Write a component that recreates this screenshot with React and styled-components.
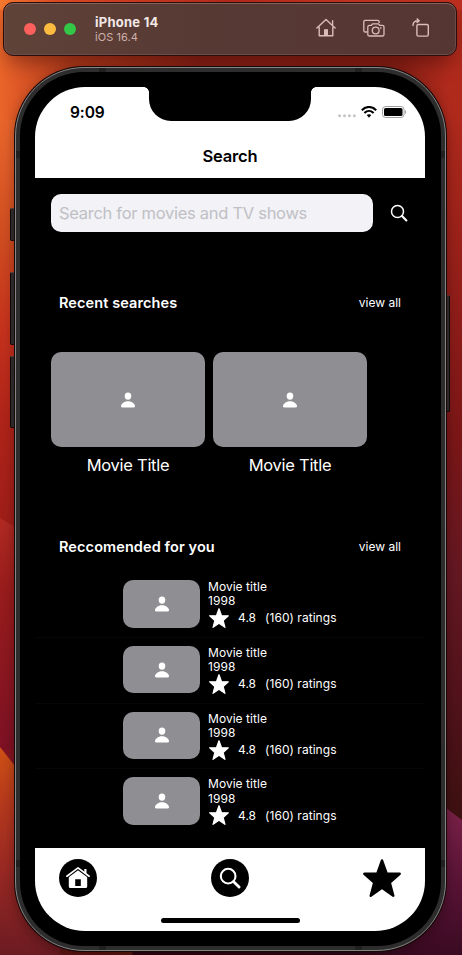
import React from "react";
import styled, { createGlobalStyle } from "styled-components";

const GlobalStyle = createGlobalStyle`
  *, *::before, *::after { box-sizing: border-box; }
  body { margin: 0; overflow: hidden; background: #7a1a18; }
`;

const Desktop = styled.main`
  position: relative;
  isolation: isolate;
  display: flex;
  flex-direction: column;
  width: 462px;
  height: 955px;
  overflow: hidden;
  font-family: Inter, "Liberation Sans", sans-serif;
  background:
    linear-gradient(90deg, #f5792f 0, #dd4a25 60px, #b52a1c 230px, #c23420 350px, #bd2f20 462px) top / 100% 10px no-repeat,
    linear-gradient(90deg, #ea6529 0, #dc5726 20px, #b43c1c 70px, #8c2216 200px, #8a2016 400px, #b02a1c 450px, #b02a1c 462px) top / 100% 120px no-repeat,
    linear-gradient(180deg, #ee6f2b 0, #e4602a 110px, #cf4c20 200px, #c5321d 290px, #b02419 380px, #9c1d18 500px, #981c18 590px, #7e1424 740px, #a02b20 850px, #7d2130 955px) left / 30px 880px no-repeat,
    linear-gradient(180deg, #bd2f20 0, #a8261b 120px, #8f1d19 270px, #7b1617 400px, #651822 530px, #54131c 650px, #3a1010 800px, #5c1838 840px, #3c0e25 955px) right / 30px 880px no-repeat,
    linear-gradient(90deg, #6c1b22 0, #5b1410 100px, #5a1a10 132px, #2b0512 133px, #2b0717 350px, #4d1231 462px);
`;

const Facet = styled.div`
  position: absolute;
  z-index: -1;
  left: ${(p) => p.$x}px;
  top: ${(p) => p.$y}px;
  width: ${(p) => p.$w}px;
  height: ${(p) => p.$h}px;
  background: ${(p) => p.$fill};
  clip-path: polygon(${(p) => p.$shape});
`;

const Toolbar = styled.header`
  display: flex;
  align-items: center;
  flex: none;
  width: 454px;
  height: 54px;
  margin: 2px 0 0 3px;
  padding: 0 27px 0 20px;
  border: 1px solid #2b0d0b;
  border-radius: 10px;
  background: linear-gradient(90deg, #5f4238, #573934 45%, #553633);
  box-shadow: inset 0 1px 0 #84635c, inset 0 0 0 1px #6c4c46, 0 10px 20px -4px rgba(30, 0, 0, 0.4);
`;

const Lights = styled.div`
  display: flex;
  gap: 8px;
`;

const Light = styled.span`
  width: 12px;
  height: 12px;
  border-radius: 50%;
  background: ${(p) => p.$color};
`;

const DeviceInfo = styled.div`
  flex: 1;
  margin-left: 19px;
`;

const DeviceName = styled.div`
  color: #f3e9e7;
  font-size: 13px;
  font-weight: 700;
  line-height: 15px;
  letter-spacing: 0.25px;
`;

const DeviceOs = styled.div`
  color: #cfb0aa;
  font-size: 11px;
  line-height: 14px;
  letter-spacing: 0.05px;
`;

const Tools = styled.div`
  display: flex;
  align-items: center;
  gap: 27px;
  color: #dcbcb7;
  svg { display: block; margin-top: -2px; }
`;

const Phone = styled.section`
  position: relative;
  flex: none;
  width: 431px;
  height: 884px;
  margin: 11px 0 0 15px;
  padding: 4px;
  border: 1px solid #858585;
  border-radius: 69px;
  background: #2d2d2d;
  box-shadow: 0 0 0 1px #170707, 0 4px 12px 1px rgba(20, 0, 0, 0.35);
`;

const SideButton = styled.span`
  position: absolute;
  z-index: -1;
  ${(p) => p.$side}: ${(p) => (p.$side === "left" ? -6 : -5)}px;
  top: ${(p) => p.$top}px;
  width: 5px;
  height: ${(p) => p.$height}px;
  border: 1px solid #120808;
  border-top-color: #514b4b;
  border-radius: 2px;
  background: #303030;
`;

const Antenna = styled.span`
  position: absolute;
  ${(p) => p.$edge}: 0;
  ${(p) => (p.$edge === "top" || p.$edge === "bottom" ? "left" : "top")}: ${(p) => p.$at}px;
  width: ${(p) => (p.$edge === "top" || p.$edge === "bottom" ? 7 : 4)}px;
  height: ${(p) => (p.$edge === "top" || p.$edge === "bottom" ? 4 : 7)}px;
  background: #202020;
`;

const Bezel = styled.div`
  width: 421px;
  height: 874px;
  padding: 15px 16px 15px 15px;
  border-radius: 64px;
  background: #000;
`;

const Screen = styled.div`
  position: relative;
  display: flex;
  flex-direction: column;
  width: 390px;
  height: 844px;
  overflow: hidden;
  border-radius: 50px;
  background: #000;
  color: #fff;
`;

const Notch = styled.div`
  position: absolute;
  left: 114px;
  top: -1px;
  width: 162px;
  height: 35px;
  border-radius: 0 0 22px 22px;
  background: #000;
  &::before, &::after {
    content: "";
    position: absolute;
    top: 1px;
    width: 5px;
    height: 5px;
  }
  &::before { left: -5px; background: radial-gradient(circle at 0 100%, transparent 4.5px, #000 5px); }
  &::after { right: -5px; background: radial-gradient(circle at 100% 100%, transparent 4.5px, #000 5px); }
`;

const StatusBar = styled.div`
  display: flex;
  align-items: center;
  justify-content: space-between;
  flex: none;
  height: 50px;
  padding: 0 18px 0 35px;
  background: #fff;
  color: #000;
  svg { display: block; }
`;

const Clock = styled.time`
  padding-top: 1px;
  font-size: 15.5px;
  font-weight: 600;
  line-height: 20px;
  letter-spacing: -0.1px;
`;

const Indicators = styled.div`
  display: flex;
  align-items: center;
  gap: 5px;
`;

const NavTitle = styled.h1`
  flex: none;
  height: 41px;
  margin: 0;
  background: #fff;
  color: #000;
  font-size: 16.5px;
  font-weight: 600;
  line-height: 38px;
  text-align: center;
  letter-spacing: -0.2px;
`;

const Content = styled.div`
  flex: 1;
  padding-top: 16px;
`;

const SearchRow = styled.div`
  display: flex;
  align-items: center;
  gap: 17px;
  padding: 0 16px;
  svg { display: block; }
`;

const SearchField = styled.div`
  width: 322px;
  height: 38px;
  padding-left: 8px;
  border-radius: 10px;
  background: #f2f2f7;
  color: #c0c0c4;
  font-size: 16.5px;
  line-height: 39px;
  letter-spacing: -0.29px;
`;

const SectionHeader = styled.div`
  display: flex;
  align-items: center;
  justify-content: space-between;
  height: 20px;
  margin-top: ${(p) => p.$space}px;
  padding: 0 24px;
`;

const SectionTitle = styled.h2`
  margin: 0;
  font-size: 14.5px;
  font-weight: 600;
  line-height: 20px;
  letter-spacing: 0.1px;
`;

const ViewAll = styled.span`
  font-size: 12px;
  line-height: 20px;
`;

const Cards = styled.div`
  display: flex;
  gap: 8px;
  margin-top: 39px;
  padding: 0 16px;
`;

const Card = styled.article`
  width: 154px;
`;

const Poster = styled.div`
  display: flex;
  align-items: center;
  justify-content: center;
  flex: none;
  width: ${(p) => p.$w}px;
  height: ${(p) => p.$h}px;
  border-radius: 10px;
  background: #8e8e93;
`;

const CardTitle = styled.div`
  height: 22px;
  margin-top: 8px;
  font-size: 16.5px;
  line-height: 21px;
  text-align: center;
  letter-spacing: -0.28px;
`;

const List = styled.div`
  margin-top: 15px;
`;

const Row = styled.article`
  display: flex;
  gap: 8px;
  height: 65.75px;
  padding: 8px 0 0 88px;
  border-bottom: 1px solid ${(p) => (p.$last ? "transparent" : "#060606")};
`;

const Details = styled.div`
  font-size: 12px;
  line-height: 14.3px;
  letter-spacing: 0.04px;
`;

const Rating = styled.div`
  display: flex;
  align-items: center;
  height: 20px;
  svg { display: block; margin: -1px 9px 0 1px; }
`;

const Score = styled.span`
  margin-right: 9px;
`;

const TabBar = styled.nav`
  display: flex;
  align-items: flex-start;
  justify-content: space-between;
  flex: none;
  height: 83px;
  padding: 11px 24px 0;
  background: #fff;
  svg { display: block; }
`;

const TabButton = styled.span`
  display: flex;
  align-items: center;
  justify-content: center;
  width: 38px;
  height: 38px;
  border-radius: 50%;
  background: ${(p) => (p.$bare ? "transparent" : "#000")};
  color: ${(p) => (p.$bare ? "#000" : "#fff")};
`;

const HomeIndicator = styled.span`
  position: absolute;
  left: 126px;
  bottom: 8px;
  width: 139px;
  height: 5px;
  border-radius: 3px;
  background: #000;
`;

const Person = () => (
  <svg width="14" height="16" viewBox="0 0 14 16" fill="#fff">
    <ellipse cx="7" cy="4.1" rx="3.3" ry="3.7" />
    <path d="M1.4 15.4C.5 15.4 0 15 0 14.2 0 12 2.8 9.2 7 9.2s7 2.8 7 5c0 .8-.5 1.2-1.4 1.2z" />
  </svg>
);

const Star = ({ size }) => (
  <svg width={size} height={size} viewBox="0 0 38 38" fill="currentColor" stroke="currentColor" strokeWidth="2.4" strokeLinejoin="round">
    <path d="M19 1.4 23.8 14.8 36.7 14.8 26.8 23.6 30.3 36.7 19 28.8 7.7 36.7 11.2 23.6 1.3 14.8 14.2 14.8Z" />
  </svg>
);

const Magnifier = ({ size, stroke }) => (
  <svg width={size} height={size} viewBox="0 0 18 18" fill="none" stroke="#fff" strokeLinecap="round">
    <circle cx="7.5" cy="7.5" r="6" strokeWidth={stroke} />
    <path d="m12 12 4.4 4.4" strokeWidth={stroke + 0.6} />
  </svg>
);

const HomeTab = () => (
  <svg width="24" height="24" viewBox="0 0 24 24" fill="none">
    <path d="M2.8 10 12 3l9.2 7v10.5c0 .9-.6 1.5-1.5 1.5H4.3c-.9 0-1.5-.6-1.5-1.5z" fill="#fff" />
    <path d="M9.2 20v-6.8h5.6V20z" fill="#000" />
    <path d="M-.4 11.2 12 2 24.4 11.2" stroke="#000" strokeWidth="3.6" />
    <path d="M19.4 3v4.5" stroke="#fff" strokeWidth="2.2" />
    <path d="M.9 10.2 12 1.9 23.1 10.2" stroke="#fff" strokeWidth="1.7" strokeLinecap="round" strokeLinejoin="round" />
  </svg>
);

const ToolHome = () => (
  <svg width="20" height="20" viewBox="0 0 20 20" fill="none" stroke="currentColor" strokeWidth="1.4" strokeLinecap="round" strokeLinejoin="round">
    <path d="m.9 10 9.1-8.4L19.1 10M3.2 8.7v9h13.6v-9M16.6 7V2.7" />
    <path d="M8 11.2h4V18H8z" fill="currentColor" stroke="none" />
  </svg>
);

const ToolCamera = () => (
  <svg width="22" height="20" viewBox="0 0 22 20" fill="none" stroke="currentColor" strokeWidth="1.3" strokeLinejoin="round">
    <path d="M4 14H2.4C1.4 14 .8 13.4.8 12.4V3.9c0-1 .6-1.6 1.6-1.6h12.2c1 0 1.6.6 1.6 1.6v1" />
    <path d="M6.4 7.4h2L9.5 5.9h6L16.6 7.4h2.8c1 0 1.6.6 1.6 1.6v7.4c0 1-.6 1.6-1.6 1.6h-13c-1 0-1.6-.6-1.6-1.6V9c0-1 .6-1.6 1.6-1.6z" />
    <circle cx="12.7" cy="12.5" r="3.4" />
    <circle cx="17.8" cy="9.9" r=".8" fill="currentColor" stroke="none" />
  </svg>
);

const ToolRotate = () => (
  <svg width="17" height="20" viewBox="0 0 17 20" fill="none" stroke="currentColor" strokeWidth="1.4" strokeLinecap="round" strokeLinejoin="round">
    <rect x="4.9" y="6.5" width="11.4" height="11.6" rx="1.3" />
    <path d="M1 7.6C.9 4.5 2.7 2.6 6.2 2.7M5.1.9 7.2 2.7 5.1 4.5" />
  </svg>
);

const Signal = () => (
  <svg width="18" height="14" viewBox="0 0 18 14" fill="#c5c5c7">
    {[1.6, 6.5, 11.4, 16.3].map((x) => <circle key={x} cx={x} cy="10.8" r="1.5" />)}
  </svg>
);

const Wifi = () => (
  <svg width="16" height="12" viewBox="0 0 16 12" fill="none" stroke="#000" strokeWidth="2.1">
    <path d="M.8 4.2C5-.1 11-.1 15.2 4.2M3.4 7c2.7-2.7 6.5-2.7 9.2 0" />
    <path d="M5.7 9.1c1.4-1.2 3.2-1.2 4.6 0L8 11.7z" fill="#000" stroke="none" />
  </svg>
);

const Battery = () => (
  <svg width="25" height="12" viewBox="0 0 25 12">
    <rect x=".5" y=".5" width="21.5" height="11" rx="3" fill="none" stroke="#a0a0a0" />
    <rect x="2" y="2" width="18.5" height="8" rx="1.5" />
    <path d="M23 4c1.6.6 1.6 3.4 0 4z" fill="#a0a0a0" />
  </svg>
);

const recent = ["Movie Title", "Movie Title"];
const recommended = [0, 1, 2, 3].map((id) => ({ id, title: "Movie title", year: 1998, score: "4.8", votes: 160 }));

export default function App() {
  return (
    <>
      <GlobalStyle />
      <Desktop>
        <Facet $x={0} $y={518} $w={15} $h={232} $shape="0 0, 100% 9px, 100% 100%, 0 100%" $fill="linear-gradient(#b12a22, #991d1c 70px, #7d1124)" />
        <Facet $x={0} $y={747} $w={60} $h={208} $shape="0 0, 100% 76px, 100% 100%, 0 100%" $fill="linear-gradient(#cf5216, #b83b1c 50px, #9a2923 120px, #6c1b22)" />
        <Facet $x={402} $y={808} $w={60} $h={147} $shape="0 0, 44px 0, 100% 12px, 100% 100%, 0 100%" $fill="linear-gradient(#7a2148, #5f1639 60px, #3a0a22)" />
        <Toolbar>
          <Lights>
            <Light $color="#ff605c" />
            <Light $color="#fdbc40" />
            <Light $color="#33c748" />
          </Lights>
          <DeviceInfo>
            <DeviceName>iPhone 14</DeviceName>
            <DeviceOs>iOS 16.4</DeviceOs>
          </DeviceInfo>
          <Tools>
            <ToolHome />
            <ToolCamera />
            <ToolRotate />
          </Tools>
        </Toolbar>
        <Phone>
          <SideButton $side="left" $top={140} $height={33} />
          <SideButton $side="left" $top={204} $height={73} />
          <SideButton $side="left" $top={288} $height={72} />
          <SideButton $side="right" $top={227} $height={117} />
          <Antenna $edge="top" $at={83} />
          <Antenna $edge="top" $at={339} />
          <Antenna $edge="bottom" $at={83} />
          <Antenna $edge="bottom" $at={339} />
          <Antenna $edge="left" $at={83} />
          <Antenna $edge="right" $at={83} />
          <Antenna $edge="left" $at={792} />
          <Antenna $edge="right" $at={792} />
          <Bezel>
            <Screen>
              <StatusBar>
                <Clock>9:09</Clock>
                <Indicators>
                  <Signal />
                  <Wifi />
                  <Battery />
                </Indicators>
              </StatusBar>
              <Notch />
              <NavTitle>Search</NavTitle>
              <Content>
                <SearchRow>
                  <SearchField>Search for movies and TV shows</SearchField>
                  <Magnifier size={18} stroke={1.5} />
                </SearchRow>
                <SectionHeader $space={61}>
                  <SectionTitle>Recent searches</SectionTitle>
                  <ViewAll>view all</ViewAll>
                </SectionHeader>
                <Cards>
                  {recent.map((title, i) => (
                    <Card key={i}>
                      <Poster $w={154} $h={95}><Person /></Poster>
                      <CardTitle>{title}</CardTitle>
                    </Card>
                  ))}
                </Cards>
                <SectionHeader $space={60}>
                  <SectionTitle>Reccomended for you</SectionTitle>
                  <ViewAll>view all</ViewAll>
                </SectionHeader>
                <List>
                  {recommended.map((m, i) => (
                    <Row key={m.id} $last={i === recommended.length - 1}>
                      <Poster $w={77} $h={47.5}><Person /></Poster>
                      <Details>
                        <div>{m.title}</div>
                        <div>{m.year}</div>
                        <Rating>
                          <Star size={20} />
                          <Score>{m.score}</Score>
                          <span>({m.votes}) ratings</span>
                        </Rating>
                      </Details>
                    </Row>
                  ))}
                </List>
              </Content>
              <TabBar>
                <TabButton><HomeTab /></TabButton>
                <TabButton><Magnifier size={22} stroke={1.7} /></TabButton>
                <TabButton $bare><Star size={38} /></TabButton>
              </TabBar>
              <HomeIndicator />
            </Screen>
          </Bezel>
        </Phone>
      </Desktop>
    </>
  );
}
